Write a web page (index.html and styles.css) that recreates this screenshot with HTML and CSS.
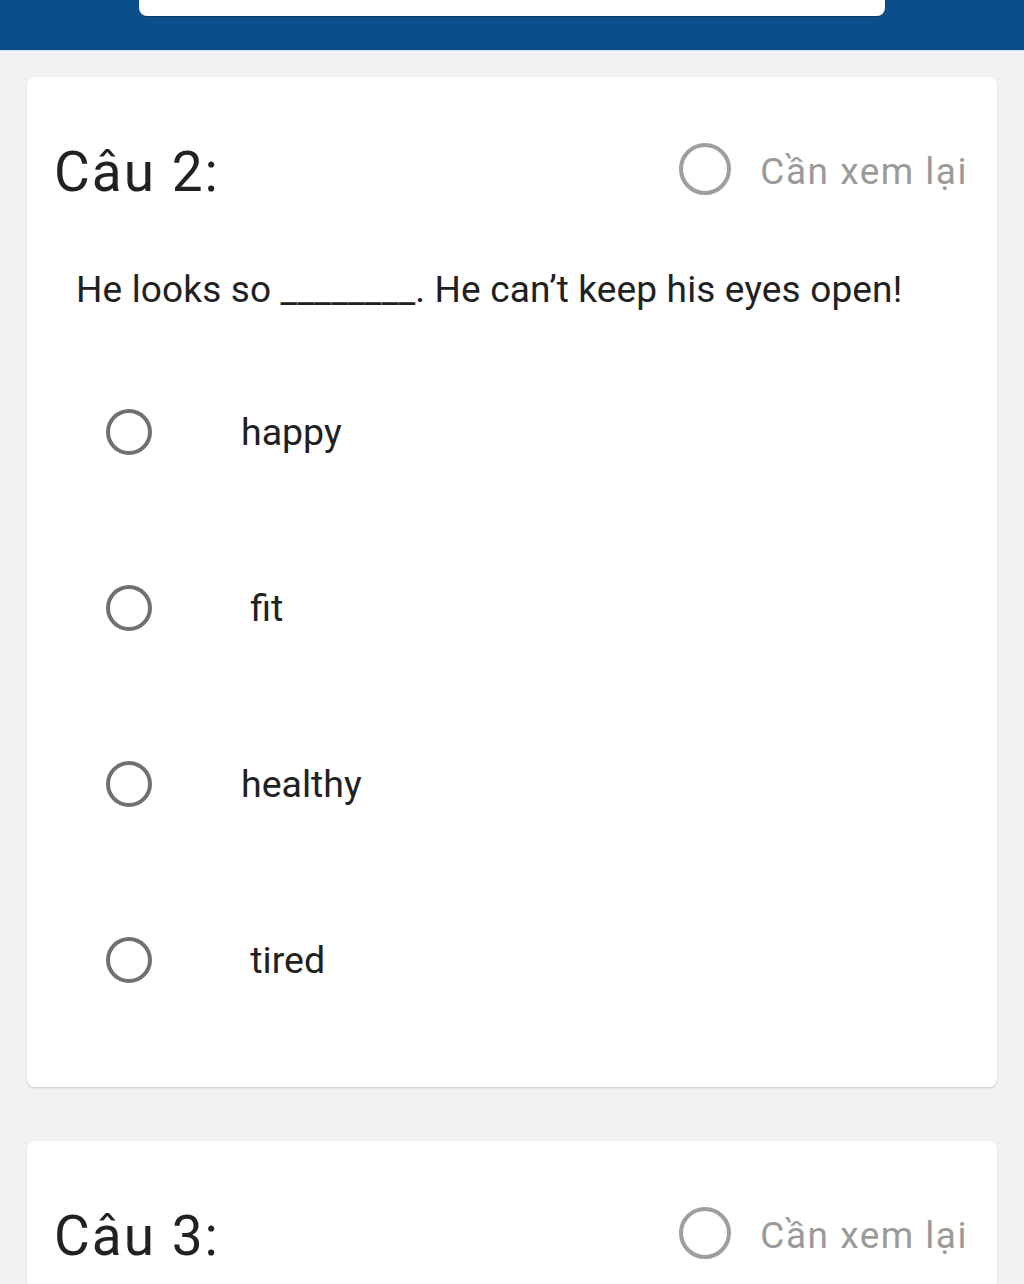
FILE: index.html
```html
<!DOCTYPE html>
<html lang="vi">
<head>
<meta charset="utf-8">
<link rel="stylesheet" href="styles.css">
</head>
<body>
<header class="topbar">
  <div class="search"></div>
</header>
<main class="list">
  <section class="card">
    <div class="card-head">
      <h2 class="q-title">Câu 2:</h2>
      <label class="review"><span class="ring ring-light"></span><span class="review-text">Cần xem lại</span></label>
    </div>
    <p class="q-text">He looks so ________. He can’t keep his eyes open!</p>
    <ul class="options">
      <li class="option"><span class="ring ring-dark"></span><span class="opt-text">happy</span></li>
      <li class="option"><span class="ring ring-dark"></span><span class="opt-text"> fit</span></li>
      <li class="option"><span class="ring ring-dark"></span><span class="opt-text">healthy</span></li>
      <li class="option"><span class="ring ring-dark"></span><span class="opt-text"> tired</span></li>
    </ul>
  </section>
  <section class="card">
    <div class="card-head">
      <h2 class="q-title">Câu 3:</h2>
      <label class="review"><span class="ring ring-light"></span><span class="review-text">Cần xem lại</span></label>
    </div>
  </section>
</main>
</body>
</html>
```
FILE: styles.css
```css
html, body {
  margin: 0;
  padding: 0;
}
body {
  background: #f1f2f4;
  font-family: Roboto, "Noto Sans", "Liberation Sans", sans-serif;
  color: #222;
  height: 1284px;
  overflow: hidden;
}
.topbar {
  height: 50px;
  background: #0b4f8a;
  display: flex;
  justify-content: center;
  box-shadow: 0 1px 0 #cfe3f3;
}
.search {
  width: 746px;
  height: 16px;
  background: #ffffff;
  border-radius: 0 0 8px 8px;
  box-shadow: 0 1px 1px rgba(0, 0, 0, 0.25);
}
.list {
  padding: 27px 27px 0;
  display: flex;
  flex-direction: column;
  gap: 54px;
}
.card {
  background: #ffffff;
  border-radius: 8px;
  box-shadow: 0 1px 2px rgba(0, 0, 0, 0.18);
  padding: 63px 29px 39px 27px;
}
.card-head {
  height: 64px;
  display: flex;
  align-items: center;
  justify-content: space-between;
}
.q-title {
  margin: 0;
  font-size: 55px;
  font-weight: 400;
  letter-spacing: 2px;
  line-height: 64px;
  color: #222;
}
.review {
  display: flex;
  align-items: center;
  gap: 29px;
}
.review-text {
  font-size: 37px;
  letter-spacing: 1.5px;
  color: #9a9a9a;
  line-height: 44px;
}
.ring {
  display: block;
  box-sizing: border-box;
  border-radius: 50%;
  flex: none;
}
.ring-light {
  width: 52px;
  height: 52px;
  border: 4px solid #9e9e9e;
  margin-top: -6px;
}
.ring-dark {
  width: 46px;
  height: 46px;
  border: 4px solid #707070;
}
.q-text {
  margin: 64px 0 32px 22px;
  font-size: 37px;
  letter-spacing: 0.15px;
  line-height: 44px;
  color: #212121;
}
.options {
  list-style: none;
  margin: 0;
  padding: 0;
}
.option {
  height: 176px;
  display: flex;
  align-items: center;
  padding-left: 52px;
}
.opt-text {
  margin-left: 89px;
  font-size: 37.5px;
  line-height: 44px;
  color: #212121;
  white-space: pre;
}
```
